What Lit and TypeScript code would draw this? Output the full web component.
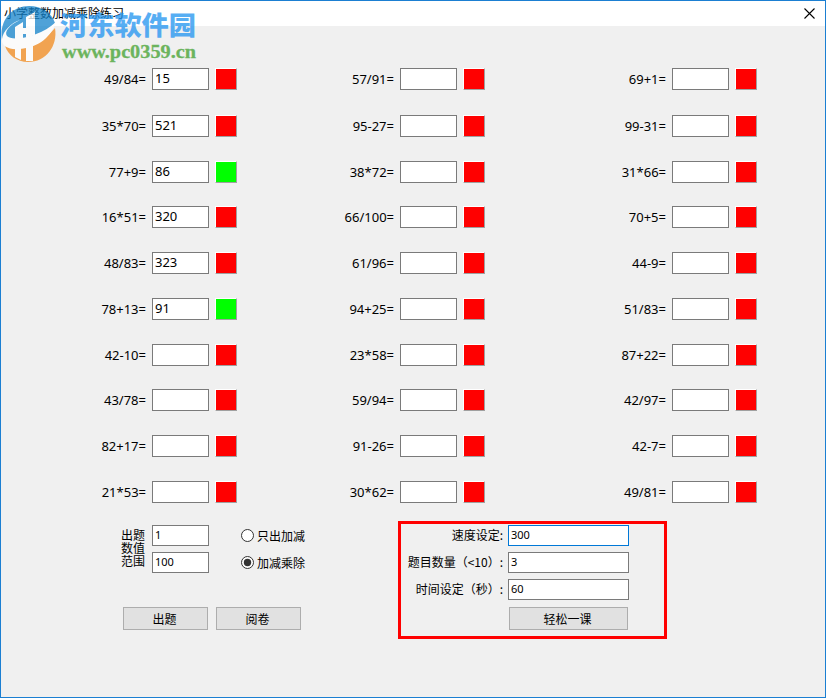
import { LitElement, html, css, svg } from "lit";
import { customElement, property } from "lit/decorators.js";
import { classMap } from "lit/directives/class-map.js";

interface Problem {
  text: string;
  answer?: string;
  correct?: boolean;
}

const PROBLEMS: Problem[][] = [
  [{ text: "49/84=", answer: "15" }, { text: "57/91=" }, { text: "69+1=" }],
  [{ text: "35*70=", answer: "521" }, { text: "95-27=" }, { text: "99-31=" }],
  [{ text: "77+9=", answer: "86", correct: true }, { text: "38*72=" }, { text: "31*66=" }],
  [{ text: "16*51=", answer: "320" }, { text: "66/100=" }, { text: "70+5=" }],
  [{ text: "48/83=", answer: "323" }, { text: "61/96=" }, { text: "44-9=" }],
  [{ text: "78+13=", answer: "91", correct: true }, { text: "94+25=" }, { text: "51/83=" }],
  [{ text: "42-10=" }, { text: "23*58=" }, { text: "87+22=" }],
  [{ text: "43/78=" }, { text: "59/94=" }, { text: "42/97=" }],
  [{ text: "82+17=" }, { text: "91-26=" }, { text: "42-7=" }],
  [{ text: "21*53=" }, { text: "30*62=" }, { text: "49/81=" }],
];

@customElement("problem-cell")
class ProblemCell extends LitElement {
  @property({ attribute: false }) problem: Problem = { text: "" };

  static styles = css`
    :host {
      display: flex;
      justify-content: flex-end;
      align-items: flex-start;
      gap: 6px;
    }
    .label {
      line-height: 22px;
      white-space: nowrap;
    }
    .answer {
      box-sizing: border-box;
      width: 57px;
      height: 22px;
      border: 1px solid #7a7a7a;
      background: #fff;
      padding-left: 2px;
      line-height: 19px;
    }
    .mark {
      box-sizing: border-box;
      width: 22px;
      height: 22px;
      background: #f00;
      border: 1px solid;
      border-color: #fff #a0a0a0 #a0a0a0 #fff;
    }
    .mark.correct {
      background: #0f0;
    }
  `;

  render() {
    const p = this.problem;
    return html`
      <span class="label">${p.text}</span>
      <div class="answer">${p.answer ?? ""}</div>
      <div class=${classMap({ mark: true, correct: !!p.correct })}></div>
    `;
  }
}

@customElement("site-watermark")
class SiteWatermark extends LitElement {
  static styles = css`
    :host {
      display: block;
      pointer-events: none;
    }
    .art {
      display: block;
    }
    .name {
      font: 900 26.5px "Noto Sans CJK SC", sans-serif;
      fill: #1f93f0;
    }
    .url {
      font: bold 19px "Liberation Serif", serif;
      fill: #3fa02c;
      stroke: #3fa02c;
      stroke-width: 0.3;
    }
  `;

  render() {
    return html`<svg class="art" width="200" height="68" viewBox="0 0 200 68" opacity="0.75">
      ${svg`
        <path d="M2 40C-1 20 12 6 29 6c13 0 23 7 26 17C46 36 34 43 20 44 12 45 5 44 2 40z" fill="#1584cc"/>
        <path d="M5 46C20 50 42 44 55 28c3 18-9 34-27 34C17 62 8 55 5 46z" fill="#f28a1c"/>
        <path d="M20 20C9 25 4 32 7 36c5 6 33 1 49-14-6 18-21 26-37 27C9 50 1 46 2 39 3 31 11 23 20 20z" fill="#fff"/>
        <path d="M15 27l8-5v18h-8zM23 28h5v6h-5zM26 17l9-5v23l-9 3z" fill="#fff"/>
        <path d="M15 46l6-1v15l-6-3zM26 43l7-3v21h-7z" fill="#fff"/>
      `}
      <text class="name" x="60" y="35" textLength="136" lengthAdjust="spacingAndGlyphs">河东软件园</text>
      <text class="url" x="62" y="58" textLength="134" lengthAdjust="spacingAndGlyphs">www.pc0359.cn</text>
    </svg>`;
  }
}

@customElement("app-root")
class AppRoot extends LitElement {
  static styles = css`
    :host {
      display: block;
      position: relative;
      box-sizing: border-box;
      width: 826px;
      height: 698px;
      border: 1px solid #1b7fd2;
      background: #f0f0f0;
      color: #000;
      font: 13px "Noto Sans", "Noto Sans CJK SC", sans-serif;
    }
    .titlebar {
      display: flex;
      justify-content: space-between;
      height: 25px;
      background: #fff;
      font: 12px/23px "Noto Sans CJK SC", sans-serif;
      padding: 0 10px 0 3px;
    }
    .close {
      margin-top: 7px;
    }
    .watermark {
      position: absolute;
      left: -1px;
      top: -1px;
    }
    .problems {
      display: grid;
      grid-template-columns: 236px 248px 272px;
      grid-template-rows: 47px 46px 45px 46px 46px 46px 45px 46px 46px 22px;
      margin-top: 42px;
    }
    .controls {
      display: flex;
      align-items: flex-start;
      margin-top: 18px;
      font: 12px "Noto Sans CJK SC", sans-serif;
    }
    .left {
      width: 277px;
      padding: 4px 0 0 120px;
    }
    .settings {
      display: flex;
    }
    .range {
      width: 25px;
      margin: 3px 6px 0 0;
      line-height: 13px;
    }
    .stack {
      display: grid;
      gap: 6px;
    }
    .field {
      box-sizing: border-box;
      height: 21px;
      border: 1px solid #7a7a7a;
      background: #fff;
      padding-left: 2px;
      font: 11px/17px "Noto Sans", sans-serif;
    }
    .short {
      width: 57px;
    }
    .focused {
      border-color: #0078d7;
    }
    .modes {
      margin-left: 32px;
    }
    .radio {
      display: flex;
      align-items: center;
      gap: 3px;
      height: 21px;
    }
    .buttons {
      display: flex;
      gap: 8px;
      margin: 34px 0 0 2px;
    }
    .button {
      box-sizing: border-box;
      width: 85px;
      height: 23px;
      border: 1px solid #adadad;
      background: #e1e1e1;
      text-align: center;
      line-height: 21px;
      padding-right: 2px;
    }
    .lesson {
      box-sizing: border-box;
      width: 269px;
      height: 118px;
      border: 3px solid #f00;
      padding-top: 1px;
    }
    .form {
      display: grid;
      grid-template-columns: 103px 121px;
      grid-auto-rows: 21px;
      gap: 6px 4px;
    }
    .caption {
      text-align: right;
      line-height: 20px;
      white-space: nowrap;
      padding-right: 1px;
    }
    .start {
      width: 119px;
      margin: 7px 0 0 108px;
    }
  `;

  private radio(label: string, checked: boolean) {
    return html`<div class="radio">
      <svg width="13" height="13" viewBox="0 0 13 13">
        <circle cx="6.5" cy="6.5" r="6" fill="#fff" stroke="#333" />
        ${checked ? svg`<circle cx="6.5" cy="6.5" r="3.7" fill="#333"/>` : ""}
      </svg>
      <span>${label}</span>
    </div>`;
  }

  render() {
    return html`
      <div class="titlebar">
        <span>小学整数加减乘除练习</span>
        <svg class="close" width="11" height="11" viewBox="0 0 11 11">
          <path d="M.5.5l10 10M10.5.5l-10 10" stroke="#000" stroke-width="1.1" />
        </svg>
      </div>
      <div class="problems">
        ${PROBLEMS.flat().map((p) => html`<problem-cell .problem=${p}></problem-cell>`)}
      </div>
      <div class="controls">
        <div class="left">
          <div class="settings">
            <div class="range">出题<br />数值<br />范围</div>
            <div class="stack">
              <div class="field short">1</div>
              <div class="field short">100</div>
            </div>
            <div class="stack modes">
              ${this.radio("只出加减", false)} ${this.radio("加减乘除", true)}
            </div>
          </div>
          <div class="buttons">
            <div class="button">出题</div>
            <div class="button">阅卷</div>
          </div>
        </div>
        <div class="lesson">
          <div class="form">
            <span class="caption">速度设定:</span>
            <div class="field focused">300</div>
            <span class="caption">题目数量（&lt;10）:</span>
            <div class="field">3</div>
            <span class="caption">时间设定（秒）:</span>
            <div class="field">60</div>
          </div>
          <div class="button start">轻松一课</div>
        </div>
      </div>
      <site-watermark class="watermark"></site-watermark>
    `;
  }
}
